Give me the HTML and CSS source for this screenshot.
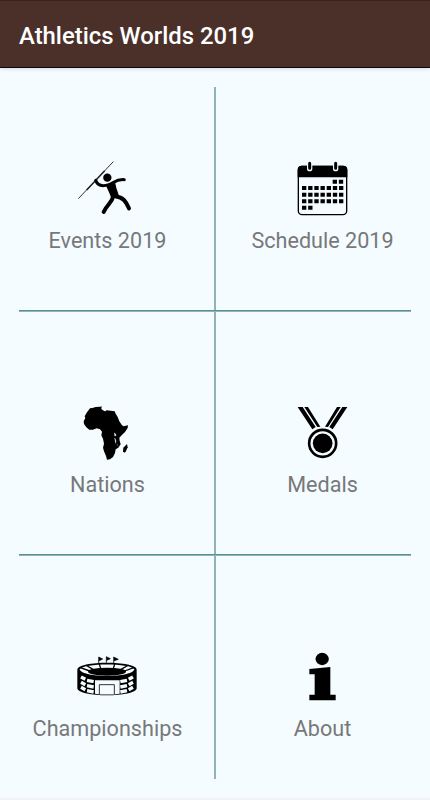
FILE: index.html
```html
<!DOCTYPE html>
<html lang="en">
<head>
<meta charset="utf-8">
<title>Athletics Worlds 2019</title>
<link rel="stylesheet" href="styles.css">
</head>
<body>
<header class="app-bar"><h1>Athletics Worlds 2019</h1></header>
<main class="menu">
  <a class="tile">
    <svg class="icon" viewBox="0 0 225 195">
      <path d="M25 131 130 20" stroke="#333" stroke-width="3" fill="none"/>
      <path d="M50 105 104 47" stroke="#222" stroke-width="4.5" fill="none"/>
      <circle cx="112" cy="68" r="12.5"/>
      <path d="M77 76C82 91 94 96 116 89C130 84 139 72 163 74" fill="none" stroke="#000" stroke-width="9" stroke-linecap="round" stroke-linejoin="round"/>
      <path d="M107 90 135 81 139 99 147 122 125 132 117 112Z"/>
      <path d="M130 124C125 145 110 149 101 171M136 124C161 128 166 137 177 160" fill="none" stroke="#000" stroke-width="12" stroke-linecap="round" stroke-linejoin="round"/>
    </svg>
    <span class="label">Events 2019</span>
  </a>
  <a class="tile">
    <svg class="icon" viewBox="0 0 225 195">
      <rect x="40" y="34" width="145" height="145" rx="11" fill="none" stroke="#000" stroke-width="4"/>
      <path d="M38 67V44Q38 32 50 32H175Q187 32 187 44V67Z"/>
      <path d="M74 28V41M152 28V41" stroke="#f4fcff" stroke-width="16" stroke-linecap="round"/>
      <path d="M74 25V40M152 25V40" stroke="#000" stroke-width="9" stroke-linecap="round"/>
      <g fill="none" stroke="#000" stroke-width="12" stroke-dasharray="13 5.5">
        <path d="M143 80H176M51 99H176M51 119H176M51 139H176M51 158H83"/>
      </g>
    </svg>
    <span class="label">Schedule 2019</span>
  </a>
  <a class="tile">
    <svg class="icon" viewBox="0 0 225 195">
      <g transform="translate(0 -3)">
        <path d="M60 31 67 30 77 27 91 26 95 25 94 33 101 38 106 40 110 37 122 38 134 40 137 47 143 57 148 70 155 80 160 85 174 82 173 90 165 102 155 112 148 119 149 128 152 139 145 149 137 154 135 165 129 177 120 184 111 185 108 174 102 160 99 149 102 137 99 122 94 112 96 101 90 94 80 91 69 95 58 95 49 88 42 78 41 70 46 60 44 55 51 43Z"/>
        <path d="M171 138 173 148 167 161 163 164 159 160 160 149Z"/>
        <path d="M133 105 137 108 138 114 134 113ZM134 120 138 128 137 136ZM141 138 145 145" fill="#f4fcff" stroke="#f4fcff"/>
      </g>
    </svg>
    <span class="label">Nations</span>
  </a>
  <a class="tile">
    <svg class="icon" viewBox="0 0 225 195">
      <g transform="translate(0 -3)">
        <path d="M38 27H53L92 87 82 94ZM58 27H69L106 86 97 87ZM187 27H172L133 87 143 94ZM167 27H156L120 86 129 87Z"/>
        <circle cx="113" cy="136" r="40.5" fill="none" stroke="#000" stroke-width="8"/>
        <circle cx="113" cy="136" r="29.5"/>
      </g>
    </svg>
    <span class="label">Medals</span>
  </a>
  <a class="tile">
    <svg class="icon" viewBox="0 0 225 195">
      <g transform="translate(0 15)">
        <path d="M22 65C22 37 200 37 200 65V120C200 149 22 149 22 120Z"/>
        <path d="M29 64C40 45 182 45 193 64C188 91 34 91 29 64Z" fill="#f4fcff"/>
        <ellipse cx="111" cy="71" rx="57" ry="12"/>
        <path d="M29 58 59 69M47 51 69 64M87 45 92 61M135 45 130 61M176 51 153 64M193 58 164 69" fill="none" stroke="#000" stroke-width="4"/>
        <path d="M28 77C40 94 182 94 194 77" fill="none" stroke="#000" stroke-width="6"/>
        <g fill="none" stroke="#f4fcff" stroke-width="10">
          <path d="M33 87 46 94M51 97 71 101M151 101 171 97M176 94 189 87M33 103 46 110M51 113 71 117M151 117 171 113M176 110 189 103M33 118 46 125M51 128 71 132M151 132 171 128M176 125 189 118"/>
        </g>
        <path d="M75 97H149V137Q111 142 75 137Z" fill="#f4fcff"/>
        <path d="M88 138V110H133V138" fill="none" stroke="#333" stroke-width="3"/>
        <path d="M86 45V27L98 33 88 38M109 45V26L121 32 111 37M131 45V27L145 34 133 38" stroke="#000" stroke-width="2"/>
      </g>
    </svg>
    <span class="label">Championships</span>
  </a>
  <a class="tile">
    <svg class="icon" viewBox="0 0 225 195">
      <g transform="translate(0 6)">
        <ellipse cx="111.5" cy="42" rx="20" ry="18.5"/>
        <path d="M73 72 136 66V149H152V166H73V149H89V88H73Z"/>
      </g>
    </svg>
    <span class="label">About</span>
  </a>
  <i class="rule rule-v"></i>
  <i class="rule rule-h"></i>
  <i class="rule rule-h second"></i>
</main>
</body>
</html>
```
FILE: styles.css
```css
* { box-sizing: border-box; }
body {
  margin: 0;
  height: 800px;
  overflow: hidden;
  background: #f4fcff;
  font-family: Roboto, "Liberation Sans", sans-serif;
}
.app-bar {
  height: 68px;
  padding: 4px 19px 0;
  display: flex;
  align-items: center;
  background: #4b302a;
  border-top: 1px solid #352022;
  border-bottom: 1px solid #160504;
  box-shadow: 0 1px 4px #0002;
}
.app-bar h1 {
  margin: 0;
  color: #fff;
  font-size: 23.9px;
  font-weight: 500;
  line-height: 28px;
  white-space: nowrap;
}
.menu {
  position: relative;
  height: 732px;
  display: grid;
  grid-template-columns: 1fr 1fr;
  grid-template-rows: repeat(3, 244px);
  border-bottom: 2px solid #f1f2f4;
}
.tile {
  display: flex;
  flex-direction: column;
  align-items: center;
  padding-top: 87px;
}
.icon {
  width: 75px;
  height: 65px;
  flex: none;
}
.label {
  margin-top: 7px;
  color: #77787a;
  font-size: 21.6px;
  line-height: 28px;
  white-space: nowrap;
}
.rule {
  position: absolute;
  background: #5c8f94;
}
.rule-v {
  left: 214px;
  top: 19px;
  width: 2px;
  height: 692px;
  background: #91b3b3;
}
.rule-h {
  left: 19px;
  top: 242px;
  width: 392px;
  height: 1px;
  box-shadow: 0 1px #8fb4ba;
}
.second { top: 486px; }
```
